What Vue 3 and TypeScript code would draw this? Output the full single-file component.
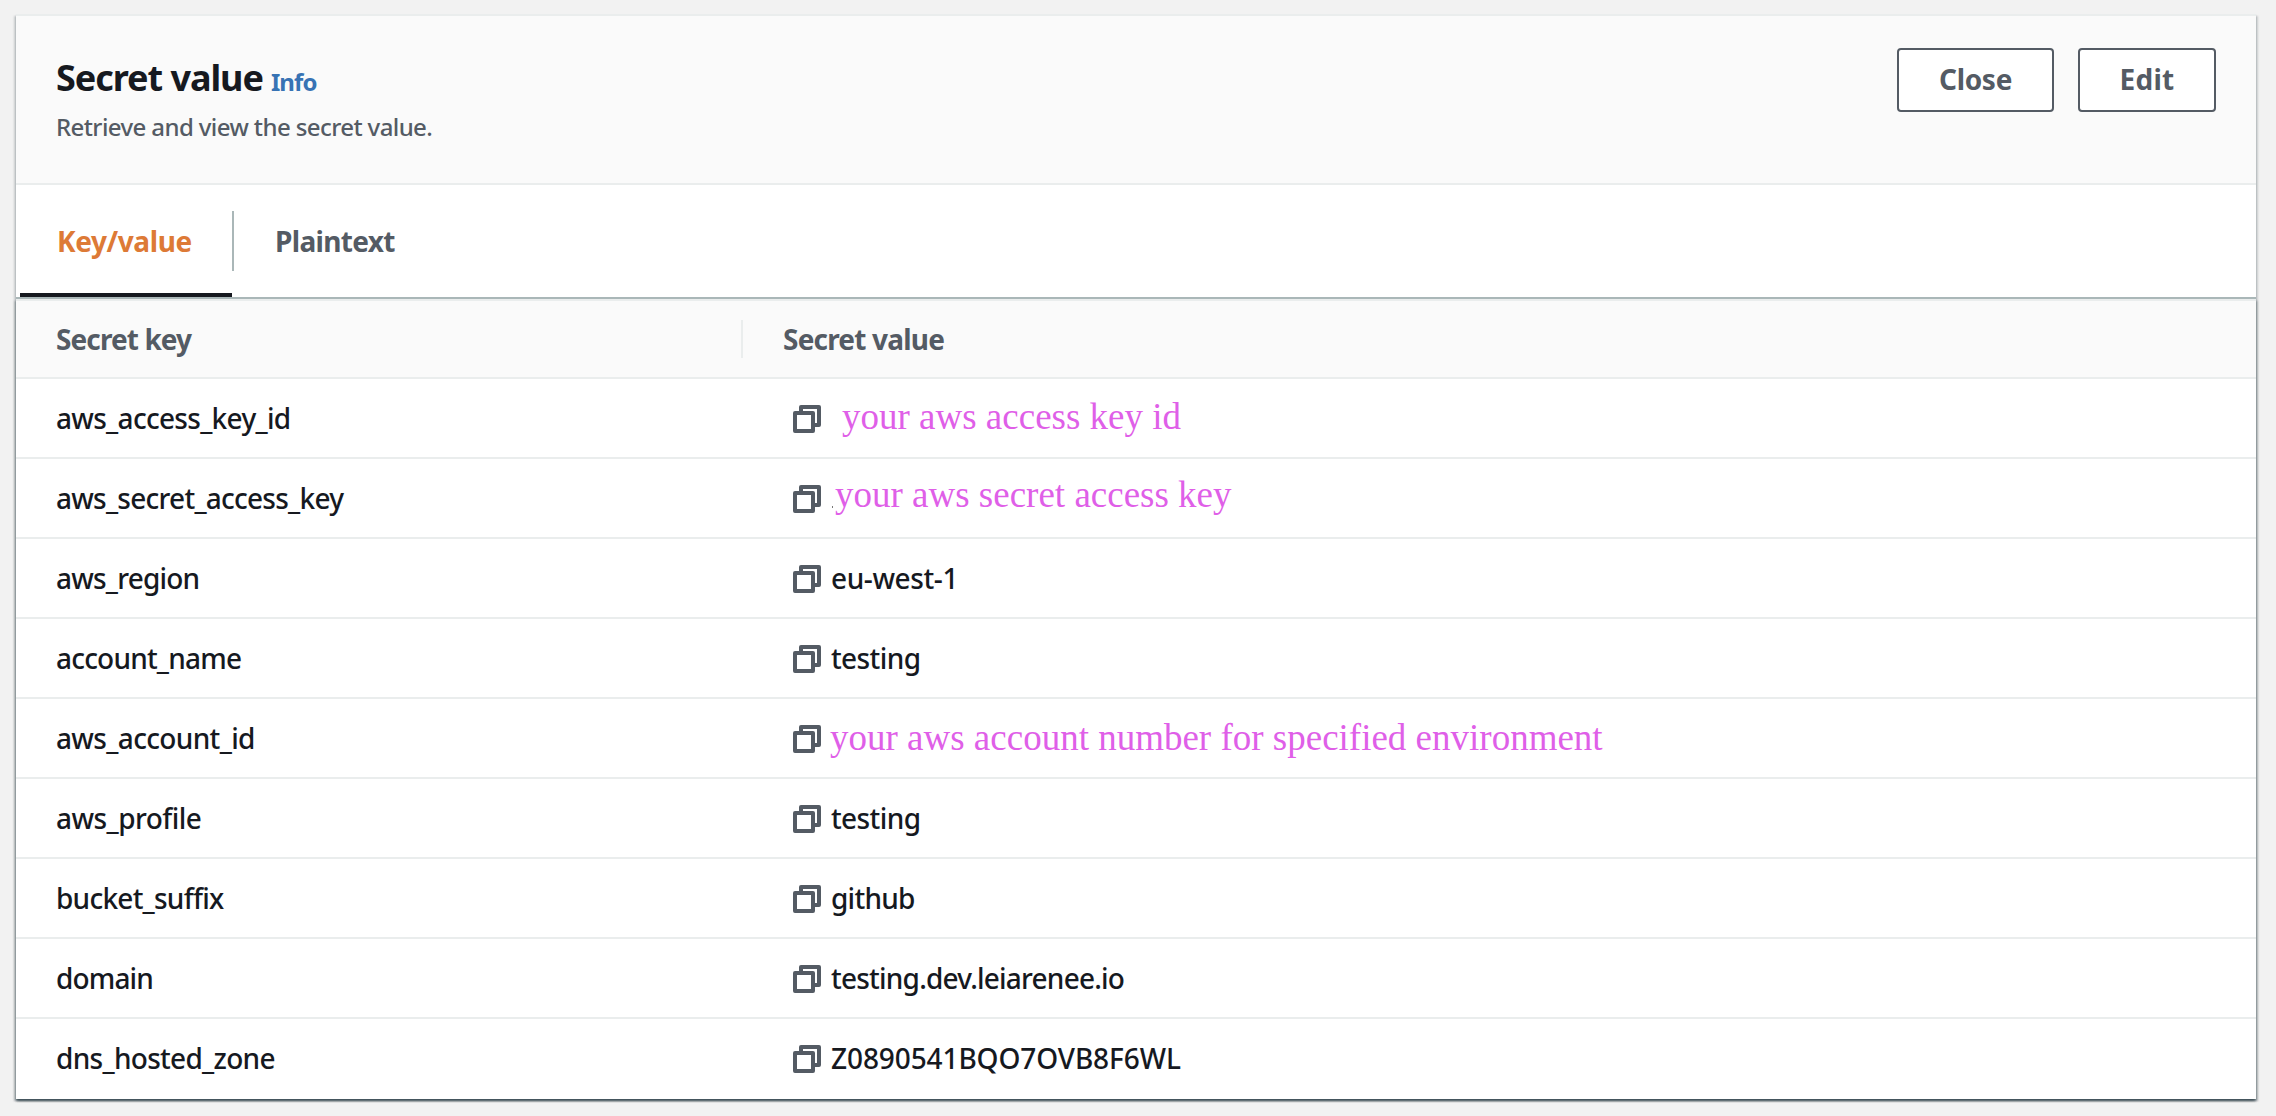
<script setup lang="ts">
interface SecretRow {
  name: string
  nameTracking: number
  value: string
  valueTracking?: number
  note?: 'id' | 'secret' | 'account'
}

const rows: SecretRow[] = [
  { name: 'aws_access_key_id', nameTracking: -0.7, value: 'your aws access key id', note: 'id' },
  { name: 'aws_secret_access_key', nameTracking: -0.75, value: 'your aws secret access key', note: 'secret' },
  { name: 'aws_region', nameTracking: -0.8, value: 'eu-west-1', valueTracking: -0.4 },
  { name: 'account_name', nameTracking: -0.8, value: 'testing', valueTracking: -0.6 },
  { name: 'aws_account_id', nameTracking: -0.65, value: 'your aws account number for specified environment', note: 'account' },
  { name: 'aws_profile', nameTracking: -0.55, value: 'testing', valueTracking: -0.6 },
  { name: 'bucket_suffix', nameTracking: -0.75, value: 'github', valueTracking: -0.75 },
  { name: 'domain', nameTracking: -0.85, value: 'testing.dev.leiarenee.io', valueTracking: -0.78 },
  { name: 'dns_hosted_zone', nameTracking: -0.7, value: 'Z0890541BQO7OVB8F6WL', valueTracking: -0.1 },
]

const tracking = (px?: number) => (px ? { letterSpacing: `${px}px` } : undefined)
</script>

<template>
  <main class="page">
    <section class="panel">
      <header class="panel-header">
        <div class="heading">
          <div class="title-line">
            <h2 class="title">Secret value</h2>
            <a class="info">Info</a>
          </div>
          <p class="description">Retrieve and view the secret value.</p>
        </div>
        <div class="actions">
          <button class="btn btn-close" type="button">Close</button>
          <button class="btn btn-edit" type="button">Edit</button>
        </div>
      </header>

      <nav class="tabs">
        <a class="tab active"><span class="tab-label">Key/value</span></a>
        <span class="tab-divider"></span>
        <a class="tab"><span class="tab-label plain">Plaintext</span></a>
      </nav>

      <div class="table">
        <div class="row head">
          <div class="cell key">Secret key</div>
          <span class="col-divider"></span>
          <div class="cell head-value">Secret value</div>
        </div>
        <div v-for="row in rows" :key="row.name" class="row">
          <div class="cell key" :style="tracking(row.nameTracking)">{{ row.name }}</div>
          <div class="cell value">
            <svg class="copy" viewBox="0 0 28 28" width="28" height="28" fill="none" stroke="#545b64" stroke-width="4" stroke-linejoin="round">
              <path d="M8 8V2h18v18h-6" />
              <path d="M2 8h18v18H2z" />
            </svg>
            <span v-if="row.note" class="note" :class="`note-${row.note}`">{{ row.value }}</span>
            <span v-else class="text" :style="tracking(row.valueTracking)">{{ row.value }}</span>
          </div>
        </div>
      </div>
    </section>
  </main>
</template>

<style>
body {
  background: #f2f2f2;
}
</style>

<style scoped>
.page {
  box-sizing: border-box;
  height: 1116px;
  padding: 14px 20px 17px 16px;
  background: #f2f2f2;
  font-family: "Noto Sans", "Open Sans", sans-serif;
  font-size: 28px;
  font-weight: 500;
  line-height: 40px;
  color: #16191f;
  overflow: hidden;
}
.panel {
  box-sizing: border-box;
  width: 2240px;
  height: 1085px;
  border-top: 2px solid #eaeded;
  background: #fff;
  box-shadow: 0 2px 2px 0 rgba(0, 28, 36, 0.3), 2px 2px 2px 0 rgba(0, 28, 36, 0.15),
    -2px 2px 2px 0 rgba(0, 28, 36, 0.15);
}
.panel-header {
  box-sizing: border-box;
  display: flex;
  justify-content: space-between;
  align-items: flex-start;
  height: 169px;
  padding: 32px 40px 0;
  background: #fafafa;
  border-bottom: 2px solid #eaeded;
}
.heading {
  padding-top: 8px;
}
.title-line {
  display: flex;
  align-items: baseline;
  height: 44px;
}
.title {
  margin: 0;
  font-size: 36px;
  line-height: 44px;
  font-weight: 700;
  letter-spacing: -1.05px;
}
.info {
  margin-left: 8px;
  font-size: 24px;
  line-height: 44px;
  font-weight: 700;
  letter-spacing: -0.9px;
  color: #3773b4;
}
.description {
  margin: 9px 0 0;
  font-size: 24px;
  line-height: 36px;
  letter-spacing: -0.6px;
  color: #545b64;
}
.actions {
  display: flex;
  gap: 24px;
}
.btn {
  box-sizing: border-box;
  height: 64px;
  padding: 0 0 1px;
  border: 2px solid #545b64;
  border-radius: 4px;
  background: #fff;
  color: #545b64;
  font: 700 28px/59px "Noto Sans", "Open Sans", sans-serif;
}
.btn-close {
  width: 157px;
  letter-spacing: -0.3px;
}
.btn-edit {
  width: 138px;
  letter-spacing: 0.3px;
}
.tabs {
  box-sizing: border-box;
  display: flex;
  height: 114px;
  padding-left: 4px;
  border-bottom: 2px solid #aab7b8;
}
.tab {
  box-sizing: border-box;
  display: flex;
  align-items: center;
  height: 112px;
  border-bottom: 4px solid transparent;
  font-weight: 700;
  letter-spacing: -0.65px;
  color: #545b64;
}
.tab-label {
  padding-top: 3px;
}
.tab.active {
  width: 212px;
  padding-left: 37px;
  border-bottom-color: #16191f;
  letter-spacing: -0.4px;
  color: #dd7a36;
}
.tab-divider {
  width: 2px;
  height: 60px;
  margin-top: 26px;
  background: #aab7b8;
}
.tab:last-child {
  padding-left: 41px;
}
.table {
  box-sizing: border-box;
  height: 800px;
  border-top: 2px solid #eaeded;
  background: #fff;
  box-shadow: 0 2px 2px 0 rgba(0, 28, 36, 0.3), 2px 2px 2px 0 rgba(0, 28, 36, 0.15),
    -2px 2px 2px 0 rgba(0, 28, 36, 0.15);
  clip-path: inset(0 -8px -8px -8px);
}
.row {
  box-sizing: border-box;
  display: flex;
  align-items: center;
  height: 80px;
  border-bottom: 2px solid #eaeded;
}
.row:last-child {
  border-bottom-color: transparent;
}
.row.head {
  height: 78px;
  background: #fafafa;
  font-weight: 700;
  color: #545b64;
}
.cell {
  white-space: nowrap;
}
.key {
  box-sizing: border-box;
  width: 725px;
  padding-left: 40px;
}
.head .key {
  letter-spacing: -0.9px;
}
.col-divider {
  width: 2px;
  height: 38px;
  background: #eaeded;
}
.head-value {
  padding-left: 40px;
  letter-spacing: -0.8px;
}
.value {
  display: flex;
  align-items: center;
  padding-left: 52px;
}
.copy {
  display: block;
  margin-top: 2px;
}
.text {
  margin-left: 10px;
}
.note {
  position: relative;
  font-family: "Liberation Serif", serif;
  font-size: 37px;
  font-weight: 400;
  color: #df5fe8;
}
.note-id {
  top: -1px;
  margin-left: 21px;
}
.note-secret {
  top: -3px;
  margin-left: 14px;
}
.note-secret::before {
  content: "";
  position: absolute;
  left: -3px;
  top: 31px;
  width: 1px;
  height: 2px;
  background: #777;
}
.note-account {
  top: 0;
  margin-left: 9px;
}
</style>
